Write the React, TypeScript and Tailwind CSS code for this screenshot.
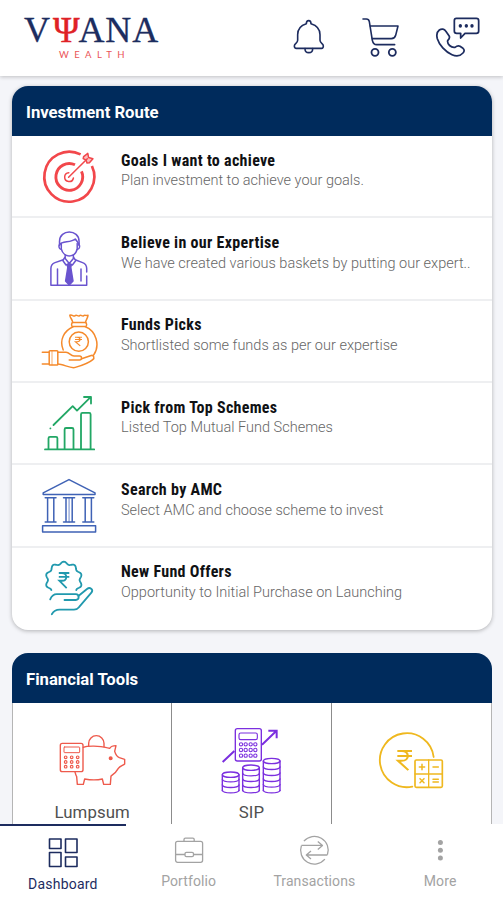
import React from "react";

interface RouteItem {
  title: string;
  description: string;
  icon: React.ReactNode;
}

interface ToolItem {
  label: string;
  icon: React.ReactNode;
}

interface NavItem {
  label: string;
  icon: React.ReactNode;
  active?: boolean;
}

const RowIcon = ({ color, children }: { color: string; children: React.ReactNode }) => (
  <svg
    viewBox="0 0 60 60"
    className={`mt-[11px] h-[60px] w-[60px] shrink-0 ${color}`}
    fill="none"
    stroke="currentColor"
    strokeWidth="1.5"
    strokeLinecap="round"
    strokeLinejoin="round"
  >
    {children}
  </svg>
);

const Rupee = ({ transform, width }: { transform: string; width: number }) => (
  <path
    d="M0 0H10M0 3.6H10M0 0H3C8.5 0 8.5 7.2 3 7.2H0.5L7.5 14"
    transform={transform}
    strokeWidth={width}
    strokeLinecap="butt"
    strokeLinejoin="miter"
  />
);

// wavy badge outline, open at the bottom where the hand sits
const badgePath = Array.from({ length: 87 }, (_, i) => {
  const angle = ((-129 + i * 3) * Math.PI) / 180;
  const r = 17.1 + 1.3 * Math.cos(10 * angle);
  const x = (24.8 + r * Math.sin(angle)).toFixed(2);
  const y = (21 - r * Math.cos(angle)).toFixed(2);
  return `${i === 0 ? "M" : "L"}${x} ${y}`;
}).join("");

const TargetIcon = () => (
  <RowIcon color="text-[#f2474b]">
    <path d="M41.6 7.4A25 25 0 1 0 52.9 19" strokeWidth="2.7" strokeLinecap="butt" />
    <path d="M36 17.8A13.4 13.4 0 1 0 42.5 24.4" strokeWidth="2.9" strokeLinecap="butt" />
    <path d="M29.8 25.8A4.4 4.4 0 1 0 34.4 31" />
    <path d="M29.6 30.3L48.3 11.8" />
    <path d="M47 13L44.2 11.6L44.6 9.6L48.8 6.4L49.6 10.6L53.9 11.7L50.4 15.8L48 16Z" fill="currentColor" fillOpacity="0.35" />
  </RowIcon>
);

const AdvisorIcon = () => (
  <RowIcon color="text-[#6a54cf]">
    <path d="M20.5 16.5V12.5C20.5 -0.2 40.1 -0.2 40.1 12.5V16.5" />
    <path d="M20.5 15.5C23 11.8 32 14 36.3 10L39.8 14.8" />
    <path d="M22.3 14.5V20C23.5 24.5 27 27 30.3 27S37 24.5 38.2 20V14.5" />
    <path d="M22.3 20.5C19.4 20 19.4 16 21 15.5M38.2 20.5C41.2 20 41.2 16 39.6 15.5" />
    <path d="M26.2 26V29.5L30.2 34.5L34.4 29.5V26" />
    <path d="M25.8 28.5L23.8 31.5L27 36L30.2 34.5L33.4 36L36.8 31.5L34.6 28.5" />
    <path d="M23.6 31L16 33.6C13 34.8 11.9 36.5 11.9 39.5V56.2H47.7V47M47.7 43V39.5C47.7 36.5 46.6 34.8 43.6 33.6L36.8 31" />
    <path d="M18.5 40V56M42 40V52" />
    <path d="M28.3 35.8H32.2L31.8 38.5L34 52L30.2 56L26.6 52L28.8 38.5Z" fill="currentColor" />
  </RowIcon>
);

const MoneyBagIcon = () => (
  <RowIcon color="text-[#f58a2c]">
    <path d="M33.8 10.5C33.5 7.5 31 6 30.8 3.2C33 2 34.5 5 36 3.8C37.5 2 39 4.8 40.4 3.8C42 2 43 4.8 44.6 3.8C46 2 47 4.6 49 3.2C49 6 46.8 7.5 46.6 10.5" />
    <rect x="32.6" y="10.6" width="15" height="4" rx="1.6" />
    <path d="M24.2 38C20 28 25 19 34 14.8M46.4 14.8C57 19 61.5 33 54.6 43.2" />
    <circle cx="39.8" cy="29.7" r="9.6" />
    <Rupee transform="translate(36 25.2) scale(.7 .62)" width={1.7} />
    <path d="M3.3 40.3H10M3.3 52H10" />
    <rect x="10.2" y="38.8" width="8.6" height="14.2" rx="0.8" />
    <path d="M13 39V53" strokeWidth="0.7" />
    <path d="M18.8 40.3H27C30.5 40.3 31.5 44 35 44H40.5C43.2 44 43.2 48 40.5 48H30.2" />
    <path d="M42.6 46.8L52.2 43.5C54.8 42.8 55.8 46 53.8 47.6C50.5 50.5 42 53.8 35.5 55.6C31 56.5 24 52 18.8 52" />
  </RowIcon>
);

const ChartIcon = () => (
  <RowIcon color="text-[#22a765]">
    <g strokeWidth="1.8">
      <path d="M6 55.4H55.2" />
      <path d="M9.5 55V44.2Q9.5 42.8 11 42.8H17Q18.4 42.8 18.4 44.2V55" />
      <path d="M25.6 55V35.4Q25.6 34 27 34H33Q34.5 34 34.5 35.4V55" />
      <path d="M42 55V20.4Q42 18.9 43.4 18.9H50.2Q51.6 18.9 51.6 20.4V55" />
      <path d="M14.5 31L33.7 12.2L38 16.6L51.6 3.2M45 3H52V9.6M11.4 34.3V34.4" />
    </g>
  </RowIcon>
);

const BankIcon = () => (
  <RowIcon color="text-[#3f62b5]">
    <path d="M4.2 18.6V16.8L30 3.6L56 16.8V18.6Z" />
    <path d="M6.2 21.8H17M6.2 46H17M8.6 22V46M14.8 22V46" />
    <path d="M24.5 21.8H35.6M24.5 46H35.6M27 22V46M33.2 22V46" />
    <path d="M30.1 22V46" strokeOpacity="0.5" />
    <path d="M43.8 21.8H54.8M43.8 46H54.8M46.2 22V46M52.4 22V46" />
    <rect x="3.6" y="49.7" width="53" height="6.4" />
  </RowIcon>
);

const OfferIcon = () => (
  <RowIcon color="text-[#2199ae]">
    <g strokeWidth="1.8">
      <path d={badgePath} />
      <Rupee transform="translate(19.8 14) scale(1.05 1.08)" width={1.7} />
      <path d="M11.2 40.4C12.6 37 14.5 35.2 17.8 35.2H36.8C40.6 35.2 40.6 41 36.8 41H25.5" />
      <path d="M39.4 37L48 30C51 27.6 54.6 30.4 52.6 33.4L40 48.2C38.6 50 37.5 50.6 35 50.6H20.5C17.2 50.6 15 51.5 12.8 55.2" />
    </g>
  </RowIcon>
);

const ToolIcon = ({ viewBox, color, children }: { viewBox: string; color: string; children: React.ReactNode }) => (
  <svg
    viewBox={viewBox}
    className={`h-[70px] w-[80px] ${color}`}
    fill="none"
    stroke="currentColor"
    strokeWidth="4.2"
    strokeLinecap="round"
    strokeLinejoin="round"
  >
    {children}
  </svg>
);

const PiggyIcon = () => (
  <ToolIcon viewBox="156 282 240 210" color="text-[#ee5a4c]">
    <rect x="181" y="340" width="68" height="85" rx="6" />
    <rect x="192" y="351" width="47" height="17" rx="2" strokeWidth="3" />
    {[382, 396, 410].map((y) =>
      [197, 215, 233].map((x) => <circle key={`${x}-${y}`} cx={x} cy={y} r="4" strokeWidth="3.4" />)
    )}
    <path d="M266 348V340A23 23 0 0 1 312 340V350" />
    <path d="M250 352C260 347 300 347 320 353L329 355C333 349 340 347 348 347L344 364C347 374 352 380 358 383L374 388V402C370 406 360 408 355 415C348 428 340 433 333 438L331 463H311L307 447C290 451 270 450 254 447L250 463H232L230 440C227 435 226 430 225 426" />
    <circle cx="332" cy="385" r="4" fill="currentColor" />
  </ToolIcon>
);

const CoinStack = ({ x, tops }: { x: number; tops: number[] }) => (
  <g>
    <ellipse cx={x + 26} cy={tops[0]} rx="25" ry="8" />
    <path d={`M${x + 1} ${tops[0]}V482M${x + 51} ${tops[0]}V482`} />
    {tops.slice(1).map((y) => (
      <path key={y} d={`M${x + 1} ${y}C${x + 4} ${y + 10} ${x + 48} ${y + 10} ${x + 51} ${y}`} />
    ))}
  </g>
);

const SipIcon = () => (
  <ToolIcon viewBox="636 282 240 210" color="text-[#7b2fdf]">
    <rect x="709" y="296" width="78" height="97" rx="6" />
    <rect x="720" y="309" width="55" height="20" rx="5" strokeWidth="3.4" />
    {[343, 360, 377].map((y) =>
      [726, 740, 755, 769].map((x) => <circle key={`${x}-${y}`} cx={x} cy={y} r="5" strokeWidth="3.2" />)
    )}
    <path d="M671 396L706 363M789 344L831 304M808 302H833V325" strokeWidth="6" strokeLinecap="butt" strokeLinejoin="miter" />
    <CoinStack x={669} tops={[434, 448, 465, 481]} />
    <CoinStack x={730} tops={[413, 430, 447, 465, 481]} />
    <CoinStack x={792} tops={[393, 411, 429, 447, 464, 481]} />
  </ToolIcon>
);

const RupeeCalcIcon = () => (
  <ToolIcon viewBox="363 282 240 210" color="text-[#efb81f]">
    <path d="M551 381A81 81 0 1 0 487 470" strokeWidth="5.5" />
    <Rupee transform="translate(442 363) scale(4.4 4.1)" width={1.5} />
    <rect x="495" y="390" width="82" height="82" rx="4" strokeWidth="5" />
    <path d="M536 390V472M495 432H577" strokeWidth="4" />
    <path d="M508 411H524M516 403V419M549 411H565M510 446L522 458M522 446L510 458M549 448H565M549 456H565" strokeWidth="4.5" />
  </ToolIcon>
);

const BellIcon = () => (
  <svg viewBox="114 42 120 138" className="h-[46px] w-10 text-[#1d2c5f]" fill="none" stroke="currentColor" strokeWidth="4.8" strokeLinecap="round" strokeLinejoin="round">
    <path d="M166 71C166 59 180 59 180 71C197 76 207 88 207 104V121C207 130 217 130 217 138C217 143 216 145 212 145H136C131 145 130 142 130 138C130 130 140 130 140 121V104C140 88 149 76 166 71Z" />
    <path d="M162 146C162 162 185 162 185 146" />
  </svg>
);

const CartIcon = () => (
  <svg viewBox="330 42 120 138" className="h-[46px] w-10 text-[#1d2c5f]" fill="none" stroke="currentColor" strokeWidth="4.8" strokeLinecap="round" strokeLinejoin="round">
    <path d="M336 57H346C351 57 354 60 355 65L364 121C366 130 369 134 377 134H431" />
    <path d="M358 78H441L434 106C432 113 429 116 421 116H364" />
    <circle cx="372" cy="157" r="10.5" strokeWidth="5.5" />
    <circle cx="424" cy="157" r="10.5" strokeWidth="5.5" />
  </svg>
);

const SupportIcon = () => (
  <svg viewBox="552 42 138 138" className="h-[46px] w-[46px] text-[#1d2c5f]" fill="none" stroke="currentColor" strokeWidth="5.2" strokeLinecap="round" strokeLinejoin="round">
    <path d="M565 90C572 85 580 87 584 93L594 107C598 113 595 117 590 122C588 132 600 144 612 142C617 138 622 136 627 139L636 145C641 149 640 155 636 159C627 169 614 169 603 164C582 155 565 135 559 116C556 105 557 96 565 90Z" />
    <path d="M616 55H676C681 55 683 57 683 62V94C683 98 681 100 676 100H642L629 114V100H617C612 100 610 98 610 94V62C610 57 612 55 616 55Z" />
    <path d="M628 77V78M646 77V78M663 77V78" strokeWidth="10" />
  </svg>
);

const NavIcon = ({ children }: { children: React.ReactNode }) => (
  <svg viewBox="0 0 32 32" className="h-8 w-8" fill="none" stroke="currentColor" strokeWidth="1.3" strokeLinejoin="round">
    {children}
  </svg>
);

const routes: RouteItem[] = [
  {
    title: "Goals I want to achieve",
    description: "Plan investment to achieve your goals.",
    icon: <TargetIcon />,
  },
  {
    title: "Believe in our Expertise",
    description: "We have created various baskets by putting our expert..",
    icon: <AdvisorIcon />,
  },
  {
    title: "Funds Picks",
    description: "Shortlisted some funds as per our expertise",
    icon: <MoneyBagIcon />,
  },
  {
    title: "Pick from Top Schemes",
    description: "Listed Top Mutual Fund Schemes",
    icon: <ChartIcon />,
  },
  {
    title: "Search by AMC",
    description: "Select AMC and choose scheme to invest",
    icon: <BankIcon />,
  },
  {
    title: "New Fund Offers",
    description: "Opportunity to Initial Purchase on Launching",
    icon: <OfferIcon />,
  },
];

const tools: ToolItem[] = [
  { label: "Lumpsum", icon: <PiggyIcon /> },
  { label: "SIP", icon: <SipIcon /> },
  { label: "", icon: <RupeeCalcIcon /> },
];

const navItems: NavItem[] = [
  {
    label: "Dashboard",
    active: true,
    icon: (
      <NavIcon>
        <path d="M2.5 2H14V11.5H2.5ZM18.5 2H30V15.5H18.5ZM2.5 15.5H14V29.5H2.5ZM18.5 20H30V29.5H18.5Z" strokeWidth="1.6" />
      </NavIcon>
    ),
  },
  {
    label: "Portfolio",
    icon: (
      <NavIcon>
        <rect x="2.6" y="7.3" width="27" height="21" rx="2" />
        <path d="M11 7.3V5.5Q11 4.1 12.4 4.1H19.8Q21.2 4.1 21.2 5.5V7.3M2.6 20.5H12M20.5 20.5H29.6" />
        <rect x="12" y="18.3" width="8.5" height="4.4" rx="1.4" />
      </NavIcon>
    ),
  },
  {
    label: "Transactions",
    icon: (
      <NavIcon>
        <path d="M5.9 7.2A13.8 13.8 0 0 1 29.4 20.8M3.4 11.6A13.8 13.8 0 0 0 26.9 25.2" />
        <path d="M3.4 11.4H24.5M19.8 7.4L24.5 11.4L19.8 15.4M29.4 21H8.6M13 17L8.3 21L13 25" />
      </NavIcon>
    ),
  },
  {
    label: "More",
    icon: (
      <NavIcon>
        <g fill="currentColor" stroke="none">
          <circle cx="16.4" cy="8.6" r="2.5" />
          <circle cx="16.4" cy="16.2" r="2.5" />
          <circle cx="16.4" cy="23.9" r="2.5" />
        </g>
      </NavIcon>
    ),
  },
];

const Header: React.FC = () => (
  <header className="relative flex h-[76px] shrink-0 items-start bg-white pl-6 pr-[22px] shadow-[0_1px_4px_rgba(0,0,0,0.22)]">
    <div className="pt-[11px]">
      <div className="flex font-['Liberation_Serif',serif] text-[36px] leading-[39px] text-[#1c2d60] [-webkit-text-stroke:0.3px_#1c2d60]">
        V<span className="ml-[3px] mr-[-1px] text-[#df2126] [-webkit-text-stroke:0.5px_#df2126]">Ψ</span>
        <span className="tracking-[0.8px]">ANA</span>
      </div>
      <div className="pl-[35px] font-['Lato',sans-serif] text-[9.5px] leading-[10px] tracking-[5.4px] text-[#ea5357]">WEALTH</div>
    </div>
    <div className="ml-auto flex pt-[14px]">
      <BellIcon />
      <div className="ml-8">
        <CartIcon />
      </div>
      <div className="ml-[34px]">
        <SupportIcon />
      </div>
    </div>
  </header>
);

const CardTitle = ({ children }: { children: React.ReactNode }) => (
  <h2 className="flex h-[50px] items-center bg-[#002b5c] px-[14px] pt-[3px] text-[16.7px] font-bold text-white">{children}</h2>
);

const App: React.FC = () => (
  <div className="flex h-[900px] w-[503px] flex-col overflow-hidden bg-[#f4f5f9] font-['Roboto',sans-serif]">
    <Header />
    <main className="min-h-0 flex-1 overflow-hidden px-3 pt-[10px]">
      <section className="h-[544px] w-[480px] overflow-hidden rounded-2xl bg-white shadow-[0_1px_4px_rgba(0,0,0,0.28)]">
        <CardTitle>Investment Route</CardTitle>
        <ul className="grid h-[494px] grid-rows-6 divide-y-2 divide-[#eeeff1]">
          {routes.map((item) => (
            <li key={item.title} className="flex min-h-0 items-start pl-[27px]">
              {item.icon}
              <div className="ml-[22px] pt-[13.6px]">
                <h3 className="font-['Roboto_Condensed','Roboto',sans-serif] text-[16px] font-bold leading-[21px] tracking-[0.3px] text-[#101114] [font-stretch:75%]">
                  {item.title}
                </h3>
                <p className="whitespace-nowrap pt-[0.8px] text-[14.5px] font-light leading-5 text-[#666]">{item.description}</p>
              </div>
            </li>
          ))}
        </ul>
      </section>

      <section className="mt-[23px] h-[250px] w-[480px] overflow-hidden rounded-t-2xl bg-white">
        <CardTitle>Financial Tools</CardTitle>
        <div className="grid h-[200px] grid-cols-3 divide-x divide-[#8c8c8c] border-x border-[#b5b5b5]">
          {tools.map((tool, index) => (
            <div key={index} className="flex flex-col items-center pt-[21px]">
              {tool.icon}
              <span className="mt-2 text-[16.8px] leading-5 tracking-[0.1px] text-[#505050]">{tool.label}</span>
            </div>
          ))}
        </div>
      </section>
    </main>

    <nav className="grid h-[76px] shrink-0 grid-cols-4 bg-white">
      {navItems.map((item) => (
        <div
          key={item.label}
          className={
            item.active
              ? "flex flex-col items-center border-t-2 border-[#1d2c5f] pt-[11px] text-[#1d2c5f]"
              : "flex flex-col items-center pt-[10px] text-[#a3a3a3]"
          }
        >
          {item.icon}
          <span
            className={
              item.active
                ? "mt-[5px] text-[14px] leading-5 tracking-[0.2px]"
                : "mt-[5px] text-[14px] leading-5 tracking-[0.1px]"
            }
          >
            {item.label}
          </span>
        </div>
      ))}
    </nav>
  </div>
);

export default App;
